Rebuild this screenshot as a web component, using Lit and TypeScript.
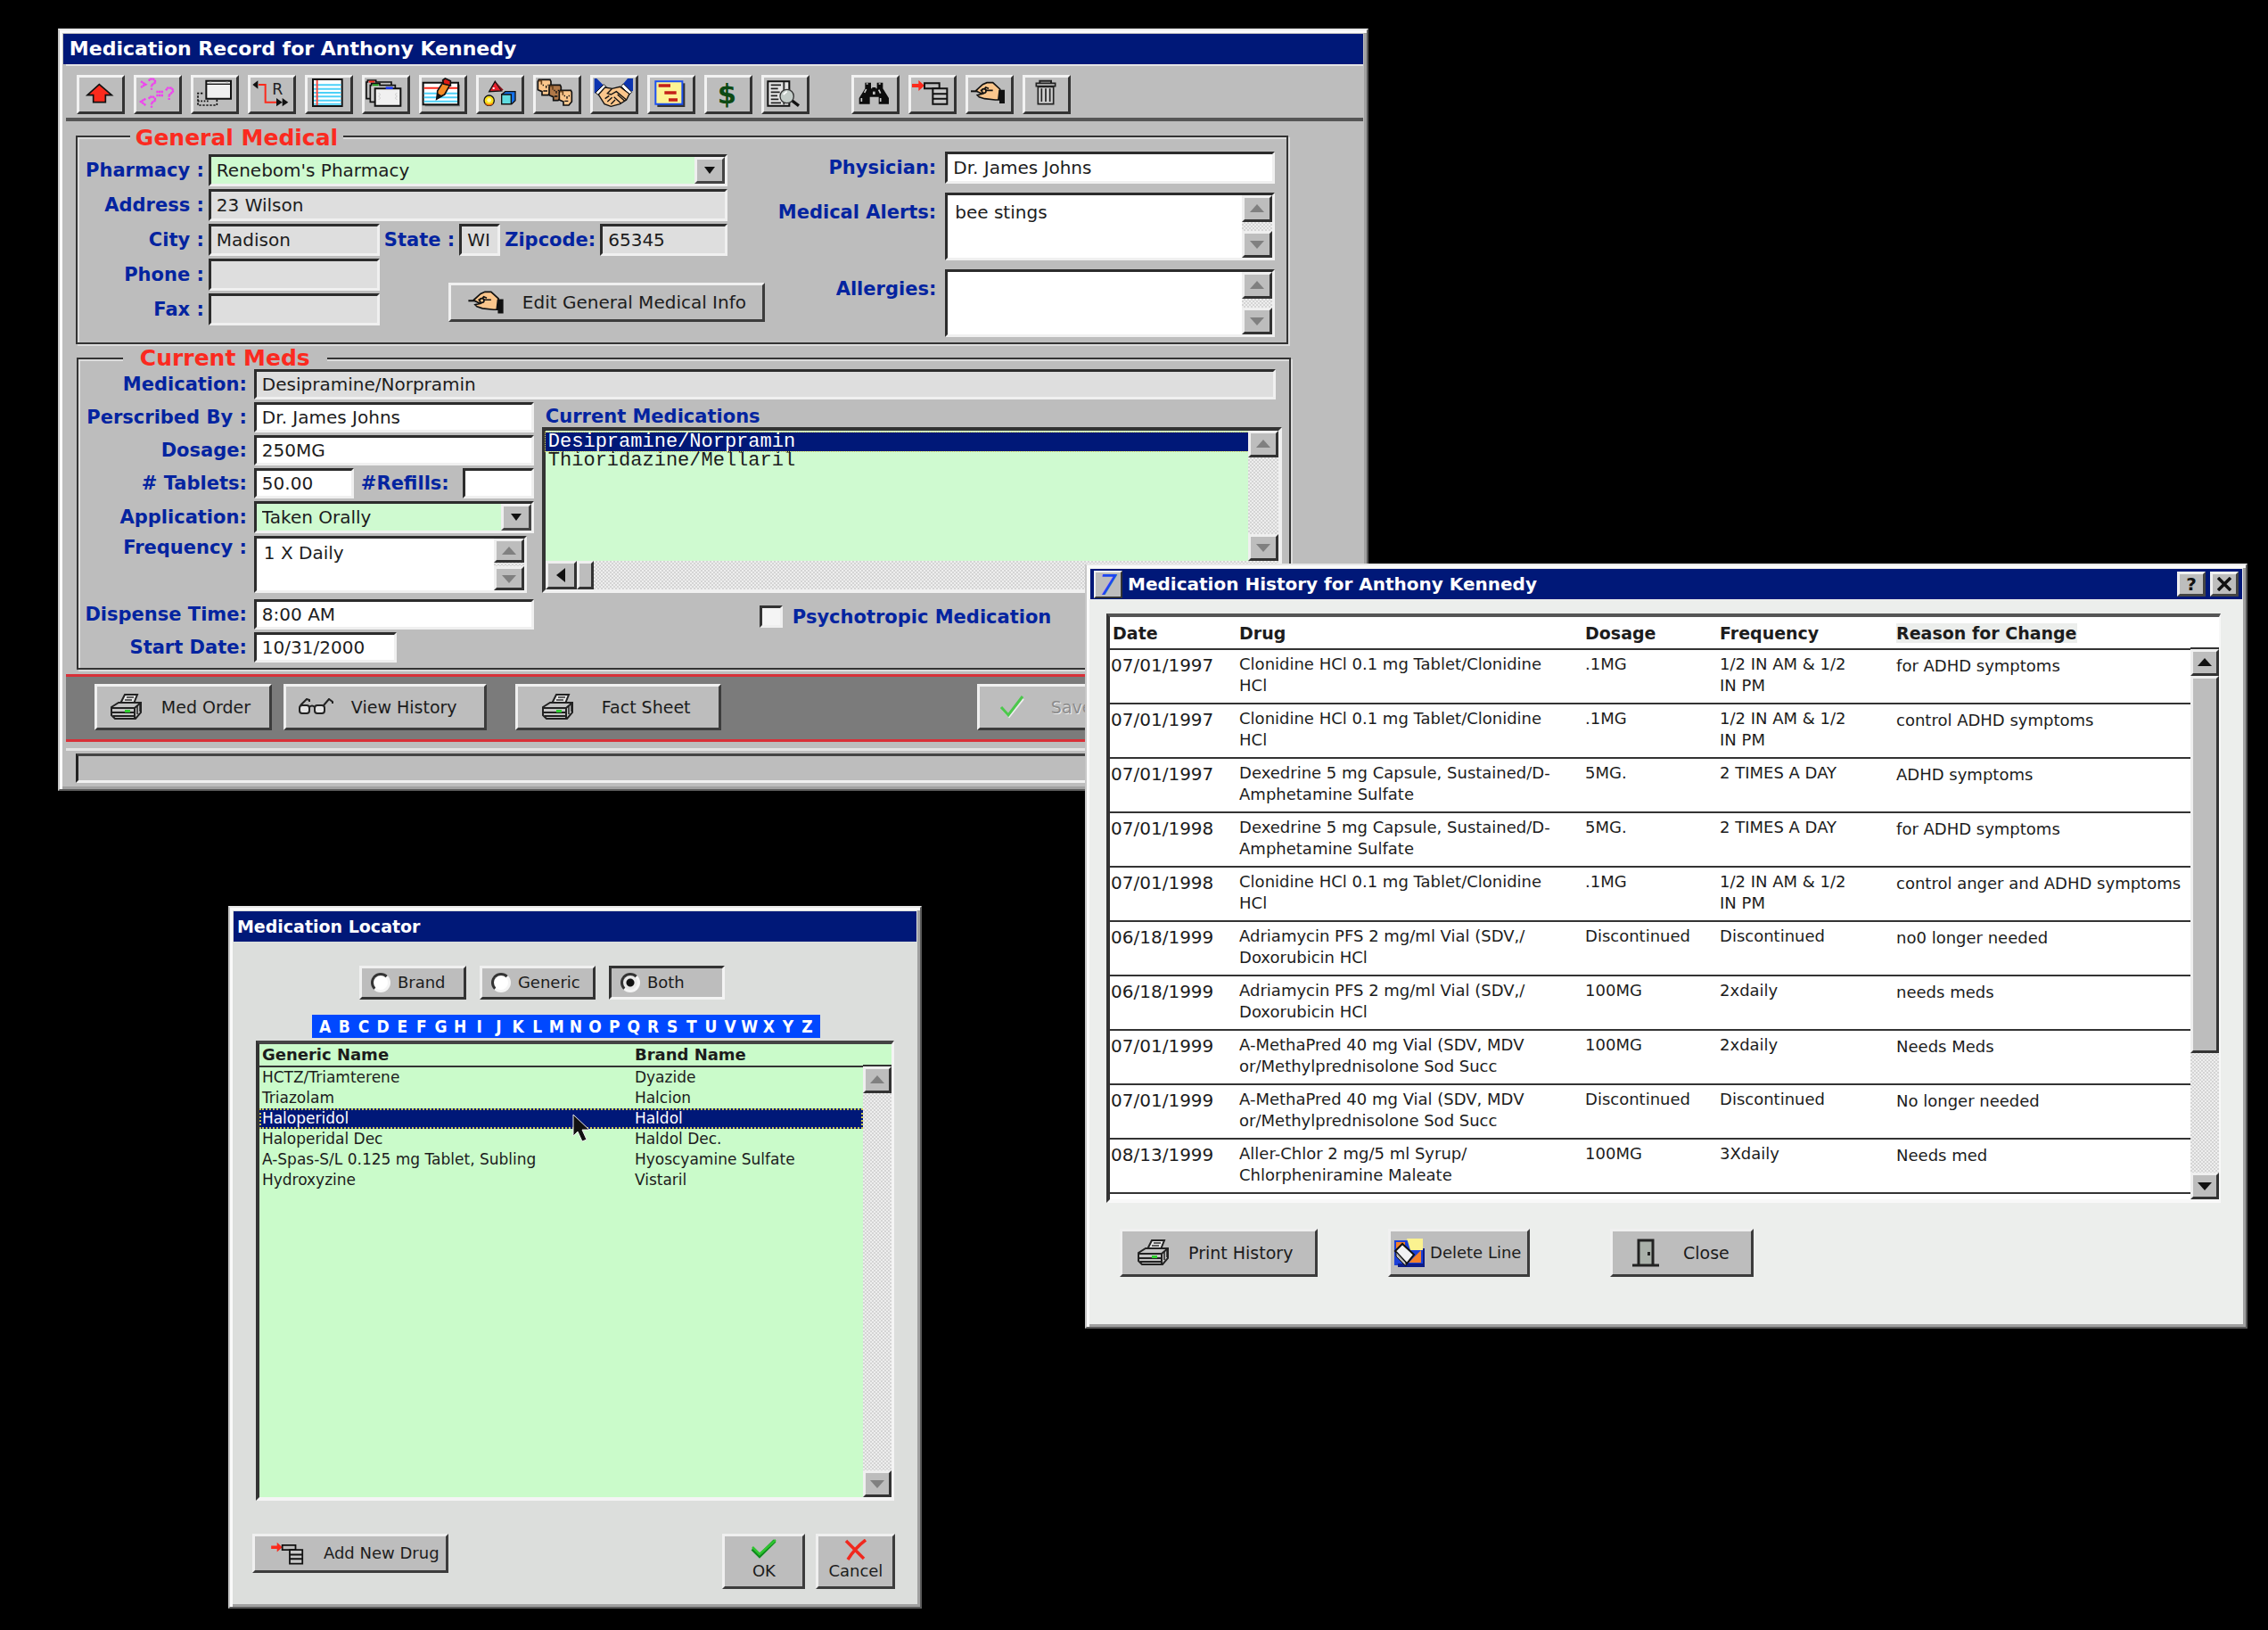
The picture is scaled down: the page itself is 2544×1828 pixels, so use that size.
import { LitElement, html, css, svg, nothing } from "lit";
import { customElement, property, state } from "lit/decorators.js";
import { classMap } from "lit/directives/class-map.js";

/* ---------- pixel-style icons ---------- */

const SKIN = "#fbc68c";

const hand = svg`
  <path d="M18 55H60" stroke="#111" stroke-width="6"/>
  <path d="M36 52 58 32 72 26H92L116 48V84L100 84 64 80 46 74 40 68 56 64 40 56Z" fill="${SKIN}" stroke="#111" stroke-width="5"/>
  <path d="M50 52H92M56 58 68 42 78 46" stroke="#111" stroke-width="5" fill="none"/>
  <circle cx="62" cy="54" r="7" fill="${SKIN}" stroke="#111" stroke-width="5"/>
  <path d="M112 50H132V96H114V84H108Z" fill="#111"/>`;

const addList = svg`
  <path d="M12 30H34V18L54 36 34 54V42H12Z" fill="#fb2a1c"/>
  <path d="M54 28H104V46H54Z" fill="#bdbdbd" stroke="#111" stroke-width="6"/>
  <path d="M82 46H130V98H82Z" fill="#c8c8c8" stroke="#111" stroke-width="6"/>
  <path d="M82 64H130M82 80H130" stroke="#111" stroke-width="6"/>`;

const face = (x: number, y: number, w: number, h: number, c: string) => svg`
  <path d="M${x + 3} ${y}H${x + w - 3}L${x + w} ${y + 6}V${y + h - 12}L${x + w - 10} ${y + h}H${x + 14}V${y + h - 12}L${x} ${y + h - 18}V${y + 6}Z" fill="${c}" stroke="#111" stroke-width="5"/>
  <path d="M${x + 2} ${y + 4}H${x + 12}V${y + 16}" stroke="#6a4420" stroke-width="5" fill="none"/>
  <path d="M${x + 18} ${y + 16}v5M${x + w - 9} ${y + 16}v5M${x + w - 16} ${y + 20}v8M${x + 18} ${y + h - 14}H${x + w - 12}" stroke="#111" stroke-width="4" fill="none"/>`;

const folder = (x: number, y: number, tab: string, fill: string) => svg`
  <path d="M${x} ${y}H${x + 4}V${y - 6}H${x + 32}V${y}H${x + 84}V${y + 56}H${x}Z" fill="${fill}" stroke="#111" stroke-width="5"/>
  <path d="M${x + 8} ${y - 4}h20v6h-20z" fill="${tab}"/>`;

const icons: Record<string, unknown> = {
  up: svg`<path d="M76 32 118 68H97V92H56V68H36Z" fill="#fb2a1c" stroke="#111" stroke-width="5"/>`,
  compare: svg`<g fill="none" stroke="#f040f0" stroke-width="7" stroke-dasharray="7 1">
    <path d="M24 22 40 32 24 42M40 80 24 90 40 102M76 57H100M76 69H100"/>
    <path d="M50 20 56 14H66L72 20V26L60 34V40M60 44v6M50 80 56 74H66L72 80V86L60 94V100M60 104v6M108 52 114 44H126L132 50V56L119 68V74M119 78v6"/></g>`,
  windows: svg`
    <path d="M40 62H24V102H88V80" fill="none" stroke="#111" stroke-width="5" stroke-dasharray="7 5"/>
    <path d="M24 88H60" stroke="#111" stroke-width="5" stroke-dasharray="5 5"/>
    <path d="M52 20H135V80H52Z" fill="#f0f0f0" stroke="#111" stroke-width="6"/>
    <path d="M52 31H135" stroke="#111" stroke-width="4"/><path d="M62 25h8M118 25h8" stroke="#ccc" stroke-width="4"/>`,
  route: svg`
    <path d="M36 33H59V92H98" fill="none" stroke="#fb2a1c" stroke-width="6"/>
    <path d="M16 33 34 19V47ZM96 78 116 92 96 106ZM116 78 136 92 116 106Z" fill="#111"/>
    <text x="82" y="66" font-family="DejaVu Sans" font-size="52" fill="#222">R</text>`,
  notebook: svg`
    <path d="M27 15H125V105H27Z" fill="#fff" stroke="#111" stroke-width="6"/>
    <path d="M30 34H122M30 47H122M30 60H122M30 73H122M30 86H122M30 98H122" stroke="#4cd0f8" stroke-width="6"/>
    <path d="M41 18V102" stroke="#fb4a40" stroke-width="6"/>`,
  folders: svg`${folder(15, 24, "#fb2a1c", "#bdbdbd")}${folder(28, 35, "#18a018", "#cfcfcf")}
    <path d="M44 46H130V104H44Z" fill="#f0f0f0" stroke="#111" stroke-width="6"/>
    <path d="M80 40H104V48H80Z" fill="#1c38f0"/>
    <path d="M56 60l6 6-6 6 6 6-6 6M118 60l-6 6 6 6-6 6 6 6" fill="none" stroke="#ccc" stroke-width="3"/>`,
  card: svg`
    <path d="M20 32H138V106H20Z" fill="#777"/>
    <path d="M14 26H132V100H14Z" fill="#fff" stroke="#111" stroke-width="6"/>
    <path d="M17 44H129" stroke="#fb2a1c" stroke-width="6"/>
    <path d="M17 62H129M17 76H129M17 89H129" stroke="#4cd0f8" stroke-width="6"/>
    <path d="M80 26 104 34 86 66 62 78 62 54Z" fill="#f58a24" stroke="#111" stroke-width="5"/>
    <path d="M56 86 60 60 80 72Z" fill="#111"/>
    <path d="M80 18 88 12 106 20 106 36 82 30Z" fill="#e01c14" stroke="#111" stroke-width="5"/>`,
  shapes: svg`
    <path d="M64 22 86 54 44 56Z" fill="#e8202c" stroke="#111" stroke-width="4"/>
    <path d="M64 22 92 50 86 54Z" fill="#801018"/><path d="M56 42h6v6h-6z" fill="#fff"/>
    <circle cx="44" cy="86" r="17" fill="#fbe21c" stroke="#111" stroke-width="4"/>
    <path d="M32 96a17 17 0 0 0 24 0" fill="none" stroke="#f07010" stroke-width="5"/><circle cx="44" cy="85" r="7" fill="#fff6b0"/>
    <path d="M86 66 98 56H132V86L120 98H86Z" fill="#1470e8" stroke="#111" stroke-width="4"/>
    <path d="M86 66H118V98H86Z" fill="#60dce0" stroke="#111" stroke-width="4"/>`,
  faces: svg`${face(16, 16, 44, 52, SKIN)}${face(54, 34, 40, 52, "#b07848")}${face(88, 52, 42, 50, SKIN)}`,
  handshake: svg`
    <path d="M14 12H22L46 36 22 58 14 62Z" fill="#0c34b0"/><path d="M144 12H126L108 34 132 58 144 54Z" fill="#0c34b0"/>
    <path d="M18 60 46 32 54 40 28 68ZM140 58 112 30 104 38 132 66Z" fill="#fff" stroke="#111" stroke-width="3"/>
    <path d="M28 66 50 42 74 46 100 40 132 64 122 84 100 98 70 106 48 98Z" fill="${SKIN}" stroke="#111" stroke-width="4"/>
    <path d="M74 46 58 62 70 66 88 56 122 84M50 80 64 70M58 90 74 76M70 98 84 84M80 74 104 96M92 66 116 88" fill="none" stroke="#111" stroke-width="4"/>`,
  planner: svg`
    <path d="M34 28H127V108H34Z" fill="#333"/>
    <path d="M28 22H118V98H28Z" fill="#fdf394" stroke="#1c50f0" stroke-width="6"/>
    <path d="M38 36H78M58 60H98M72 84H102" stroke="#c42018" stroke-width="11"/>`,
  dollar: svg`<text x="76" y="96" text-anchor="middle" font-family="DejaVu Sans" font-weight="700" font-size="92" fill="#0c4a14">$</text>`,
  search: svg`
    <path d="M22 22H94V104H22Z" fill="#e4e4e4" stroke="#111" stroke-width="6"/>
    <path d="M32 34h34M32 46h24M32 58h30M32 70h22M32 82h26M32 94h34" stroke="#222" stroke-width="5"/>
    <path d="M76 24V100" stroke="#333" stroke-width="6"/>
    <path d="M100 84 126 104" stroke="#111" stroke-width="10"/>
    <circle cx="86" cy="72" r="23" fill="#c4ccc8" stroke="#333" stroke-width="4"/><path d="M74 66l12-10" stroke="#fff" stroke-width="5"/>`,
  find: svg`
    <path d="M46 26H66V46H70V42H82V46H86V26H106V46L126 78V98H92V74H62V98H26V78L46 46Z" fill="#0c0c0c"/>
    <path d="M34 78v12M98 78v12M50 48l-6 12M92 50l6 12M50 30h6M92 30h6" stroke="#ccc" stroke-width="5"/>
    <path d="M72 56h8v10h-8z" fill="#bdbdbd"/>`,
  addList,
  hand,
  trash: svg`
    <path d="M58 28V20H96V28" fill="none" stroke="#222" stroke-width="6"/>
    <path d="M46 28H110V38H46Z" fill="#c8c8c8" stroke="#222" stroke-width="5"/>
    <path d="M52 40H104V98H52Z" fill="#cfcfcf" stroke="#222" stroke-width="5"/>
    <path d="M64 46V90M78 46V90M92 46V90" stroke="#222" stroke-width="5"/>`,
};

const glyph = (w: number, h: number, box: string, body: unknown) =>
  html`<svg class="glyph" width=${w} height=${h} viewBox=${box} aria-hidden="true">${body}</svg>`;

const printer = glyph(36, 30, "0 0 36 30", svg`
  <path d="M11 11 16 1H30L26 11" fill="#e6e6e6" stroke="#222" stroke-width="2"/>
  <path d="M18 4h8M16 7h8M15 10h8" stroke="#333" stroke-width="1.4"/>
  <path d="M1 15 9 10H34V21L28 28H5L1 24Z" fill="#c4c4c4" stroke="#222" stroke-width="2"/>
  <path d="M1 16H27L34 10M27 16V28M2 21H27M3 25H27" fill="none" stroke="#222" stroke-width="2"/>
  <path d="M30 13v10M33 12v8" stroke="#222" stroke-width="1.5"/>
  <path d="M16 18h6v3h-6z" fill="#2fd02f"/>`);
const glasses = glyph(40, 20, "0 0 40 20", svg`
  <g fill="none" stroke="#222" stroke-width="2"><rect x="2" y="8" width="11" height="9" rx="3" fill="#e2e2e2"/><rect x="19" y="8" width="11" height="9" rx="3" fill="#e2e2e2"/>
  <path d="M13 10Q16 7 19 10M3 8 10 1 13 2V4M29 8 35 1 39 4V6"/></g>`);
const handGlyph = glyph(42, 28, "14 20 122 80", hand);
const addGlyph = glyph(38, 28, "8 16 128 86", addList);
const check = (w: number, h: number) => glyph(w, h, "0 0 30 24", svg`<path d="M2 11 10 19 27 2" fill="none" stroke="#0d8a1c" stroke-width="4"/><path d="M2 9 10 17 28 1" fill="none" stroke="#2fc430" stroke-width="2.5"/>`);
const paleCheck = glyph(28, 28, "0 0 28 28", svg`<path d="M4 17 11 25 27 5" fill="none" stroke="#eee" stroke-width="2"/><path d="M2 14 10 23 26 2" fill="none" stroke="#4cc84c" stroke-width="3"/>`);
const cross = glyph(26, 24, "0 0 26 24", svg`<path d="M2 2 22 22M24 1Q12 10 4 23" fill="none" stroke="#f0281e" stroke-width="3.5"/>`);
const eraser = glyph(36, 34, "0 0 36 34", svg`
  <path d="M2 3H34V31H2Z" fill="#1c40d8"/><path d="M6 31H36V12" fill="none" stroke="#0c1c88" stroke-width="4"/>
  <path d="M16 1H34V14H20Z" fill="#fbf290"/><path d="M4 5H14V12H4ZM18 28 32 14V28Z" fill="#f5802a"/>
  <path d="M3 15 11 7 24 19 16 29Z" fill="#f2f2f2" stroke="#111" stroke-width="2"/><path d="M4 16v5l11 11v-4z" fill="#bbb" stroke="#111" stroke-width="1"/>`);
const door = glyph(30, 32, "0 0 30 32", svg`
  <path d="M7 29V2H23V29" fill="#a9b0a9" stroke="#222" stroke-width="3"/><path d="M0 30H30" stroke="#222" stroke-width="3"/><path d="M17 15h3v4h-3z" fill="#222"/>`);

/* ---------- shared styles ---------- */

const shared = css`
  :host { display: block; font: 20px/24px "DejaVu Sans", Verdana, sans-serif; color: #1c1c1c; }
  * { box-sizing: border-box; }
  button, input, select, textarea { font: inherit; color: inherit; margin: 0; }
  .glyph { display: block; flex: none; }
  .btn {
    display: flex; align-items: center; padding: 0 4px; border: 3px solid;
    border-color: #f0f0f0 #3c3c3c #3c3c3c #f0f0f0; background: #bdbdbd; border-radius: 0;
    font-size: 19px; white-space: nowrap; cursor: pointer;
  }
  .btn:active { border-color: #3c3c3c #f0f0f0 #f0f0f0 #3c3c3c; }
`;

/* ---------- window frame ---------- */

@customElement("app-window")
class AppWindow extends LitElement {
  @property() heading = "";
  static styles = [shared, css`
    .frame {
      border: 2px solid; border-color: #e8e8e8 #5a5a5a #5a5a5a #c8c8c8; padding: 4px;
      background: var(--face, #bdbdbd); box-shadow: inset 3px 3px #fafafa, inset -3px -3px #a0a0a0;
    }
    .title {
      display: flex; align-items: center; gap: 6px; height: 34px; margin: 0; padding: 0 4px 0 var(--title-pad, 4px);
      background: #001878; color: #fff; font-size: var(--title-size, 20px); font-weight: 700; white-space: nowrap;
    }
    .text { flex: 1; }
  `];
  render() {
    return html`<section class="frame" aria-label=${this.heading}>
      <h1 class="title"><slot name="badge"></slot><span class="text">${this.heading}</span><slot name="controls"></slot></h1>
      <slot></slot>
    </section>`;
  }
}

/* ---------- scroll bar ---------- */

@customElement("scroll-bar")
class ScrollBar extends LitElement {
  @property({ type: Boolean }) active = false;
  @property({ type: Number }) thumb = 0;
  static styles = [shared, css`
    :host { display: flex; flex-direction: column; width: 34px; flex: none;
      background: repeating-conic-gradient(#eee 0 25%, #d4d4d4 0 50%) 0 0 / 4px 4px; }
    .arrow { display: grid; place-items: center; height: 30px; padding: 0; border: 3px solid;
      border-color: #efefef #333 #333 #efefef; background: #bdbdbd; color: #808080; }
    .active { color: #111; }
    .track { flex: 1; min-height: 0; }
    .thumb { border: 3px solid; border-color: #efefef #333 #333 #efefef; background: #bdbdbd; }
    :host([small]) .arrow { height: 27px; }
  `];
  render() {
    const c = classMap({ arrow: true, active: this.active });
    return html`
      <button class=${c} aria-label="Scroll up">${glyph(16, 10, "0 0 16 10", svg`<path d="M8 0 16 9H0Z" fill="currentColor"/>`)}</button>
      <div class="track">${this.thumb ? html`<div class="thumb" style="height:${this.thumb}%"></div>` : nothing}</div>
      <button class=${c} aria-label="Scroll down">${glyph(16, 10, "0 0 16 10", svg`<path d="M0 1H16L8 10Z" fill="currentColor"/>`)}</button>`;
  }
}

/* ---------- medication record ---------- */

@customElement("medication-record")
class MedicationRecord extends LitElement {
  @state() private selected = 0;

  static styles = [shared, css`
    .toolbar { display: flex; gap: 10px; padding: 10px 12px 4px; border-bottom: 4px solid #555; border-top: 2px solid #e4e4e4; margin-left: 3px; }
    .tool { width: 54px; height: 44px; padding: 0; border: 3px solid; border-color: #f2f2f2 #333 #333 #f2f2f2; background: #bdbdbd; flex: none; }
    .tool svg { display: block; margin: -3px; }
    .tool.apart { margin-left: 37px; }
    fieldset { min-width: 0; border: 2px solid #333; box-shadow: inset 2px 2px #dcdcdc, 2px 2px #dcdcdc; margin: 0; }
    legend { font-size: 25px; font-weight: 700; line-height: 24px; color: #fb2a20; background: #bdbdbd; }
    .general { margin: 3px 84px 0 14px; padding: 3px 13px 6px 6px; display: grid; grid-template-columns: minmax(0, 761fr) minmax(0, 578fr); }
    .general legend { margin-left: 53px; padding: 4px 6px 0; }
    .current { margin: 4px 81px 0 15px; padding: 0 8px 6px 0; }
    .current legend { margin-left: 50px; padding: 0 19px; }
    label, .caption { font-size: 21px; font-weight: 700; color: #0424a0; white-space: nowrap; }
    .field { height: 36px; min-width: 0; border: 3px solid; border-color: #2c2c2c #f0f0f0 #f0f0f0 #2c2c2c; padding: 0 6px; background: #fff; border-radius: 0; outline: none; }
    .off { background: #dedede; }
    .combo { display: flex; padding: 0; background: #cffad0; }
    .combo select { flex: 1; min-width: 0; appearance: none; border: 0; background: none; padding: 0 6px; outline: none; }
    .drop { display: grid; place-items: center; width: 34px; border: 3px solid; border-color: #efefef #444 #444 #efefef; background: #bdbdbd; pointer-events: none; }
    .memo { display: flex; height: 76px; padding: 0; }
    .memo textarea { flex: 1; min-width: 0; border: 0; padding: 7px 8px; resize: none; outline: none; overflow: hidden; background: none; }
    .rows { display: grid; grid-template-columns: minmax(0, 1fr); gap: 3px; align-content: start; }
    .row { display: flex; align-items: center; gap: 5px; }
    .row > label:first-child { flex: none; width: 136px; text-align: right; }
    .grow { flex: 1; }
    .inset { padding-right: 37px; }
    .pad3 { padding-top: 3px; }
    .w192 { width: 192px; flex: none; }
    .state { width: 46px; flex: none; }
    .contact { display: flex; align-items: flex-start; }
    .contact .rows { width: 333px; flex: none; }
    .edit { flex: 1; height: 44px; margin: 27px 0 0 77px; padding: 0 18px; gap: 20px; font-size: 20px; }
    .right { display: grid; gap: 10px; align-content: start; }
    .right .row { gap: 10px; }
    .right .row > label:first-child { flex: 1; width: auto; }
    .right .field { width: 370px; }
    .top { align-items: flex-start; }
    .top > label { padding-top: 10px; }
    .current .row { gap: 8px; }
    .current .row > label:first-child { width: 189px; }
    .current .field { height: 34px; }
    .wide { margin-right: 7px; }
    .split { display: grid; grid-template-columns: 520px 1fr; margin-top: 3px; }
    .current .w314 { width: 314px; }
    .current .w306 { width: 306px; }
    .current .w112 { width: 112px; }
    .current .w160 { width: 160px; }
    .current .w80 { width: 80px; }
    .tablets { width: 511px; }
    .tablets .w80 { margin-left: auto; }
    .current .combo { height: 36px; }
    .current .memo { height: 64px; margin-bottom: 4px; }
    .current .memo textarea { padding: 4px 8px; }
    .current .top > label { padding-top: 1px; }
    .caption { padding: 4px 0 0 4px; line-height: 24px; margin: 0; }
    .list { height: 186px; border: 4px solid; border-color: #333 #f0f0f0 #f0f0f0 #333; background: #cffad0; display: grid; grid-template-columns: 1fr 34px; grid-template-rows: 1fr 32px; }
    .options { margin: 0; padding: 2px 0 0; list-style: none; font: 22px/21px "Liberation Mono", monospace; }
    .option { padding-left: 3px; white-space: pre; }
    .picked { background: #001878; color: #fff; outline: 1px dotted #d8d860; }
    .hscroll { grid-column: 1 / -1; display: flex; background: repeating-conic-gradient(#eee 0 25%, #d4d4d4 0 50%) 0 0 / 4px 4px; }
    .hbtn { width: 35px; padding: 0; border: 3px solid; border-color: #efefef #333 #333 #efefef; background: #bdbdbd; display: grid; place-items: center; }
    .hthumb { width: 19px; border: 3px solid; border-color: #efefef #333 #333 #efefef; background: #bdbdbd; }
    .flag { display: flex; align-items: center; gap: 11px; margin: 14px 0 0 244px; }
    .flag input { appearance: none; width: 26px; height: 25px; border: 3px solid; border-color: #333 #efefef #efefef #333; background: #f4f4f4; border-radius: 0; }
    .flag input:checked { background: #333; }
    .actions { display: flex; gap: 13px; margin: 5px 0 0 3px; padding: 8px 32px 10px; background: #7b7b7b; border: solid #d83038; border-width: 3px 0; }
    .actions .btn { height: 52px; }
    .order { width: 199px; padding: 0 15px; gap: 21px; }
    .view { width: 228px; padding: 0 13px; gap: 20px; }
    .fact { width: 231px; padding: 0 27px; gap: 31px; margin-left: 19px; }
    .save { width: 231px; padding: 0 22px; gap: 30px; margin-left: 274px; color: #8c8c8c; text-shadow: 1px 1px #eee; }
    .status { margin: 7px 10px 3px 3px; padding-left: 11px; border-top: 3px solid #e4e4e4; }
    .well { height: 33px; margin-top: 3px; border: 3px solid; border-color: #444 #f0f0f0 #f0f0f0 #222; }
  `];

  private tools: [string, string][] = [
    ["up", "Go up"], ["compare", "Compare"], ["windows", "Windows"], ["route", "Routing"], ["notebook", "Notes"],
    ["folders", "Folders"], ["card", "Edit card"], ["shapes", "Activities"], ["faces", "Family"], ["handshake", "Agreements"],
    ["planner", "Planner"], ["dollar", "Billing"], ["search", "Search record"], ["find", "Find"], ["addList", "Add"],
    ["hand", "Edit"], ["trash", "Delete"],
  ];
  private meds = ["Desipramine/Norpramin", "Thioridazine/Mellaril"];

  private combo(id: string, value: string, cls: string) {
    return html`<div class="field combo ${cls}"><select id=${id}><option>${value}</option></select>
      <span class="drop">${glyph(12, 8, "0 0 12 8", svg`<path d="M0 0H12L6 8Z" fill="#111"/>`)}</span></div>`;
  }
  private memo(id: string, value: string, cls = "", small = false) {
    return html`<div class="field memo ${cls}"><textarea id=${id} .value=${value}></textarea><scroll-bar ?small=${small}></scroll-bar></div>`;
  }

  render() {
    return html`<app-window heading="Medication Record for Anthony Kennedy">
      <div class="toolbar" role="toolbar">${this.tools.map(([k, t]) => html`
        <button class="tool ${k === "find" ? "apart" : ""}" aria-label=${t}><svg width="54" height="44" viewBox="0 0 162 132">${icons[k]}</svg></button>`)}</div>

      <fieldset class="general">
        <legend>General Medical</legend>
        <div class="rows pad3">
          <div class="row inset"><label for="pharmacy">Pharmacy :</label>${this.combo("pharmacy", "Renebom's Pharmacy", "grow")}</div>
          <div class="row inset"><label for="address">Address :</label><input class="field off grow" id="address" value="23 Wilson"></div>
          <div class="row inset"><label for="city">City :</label><input class="field off w192" id="city" value="Madison">
            <label for="state">State :</label><input class="field off state" id="state" value="WI">
            <label for="zip">Zipcode:</label><input class="field off grow" id="zip" value="65345"></div>
          <div class="contact">
            <div class="rows">
              <div class="row"><label for="phone">Phone :</label><input class="field off w192" id="phone"></div>
              <div class="row"><label for="fax">Fax :</label><input class="field off w192" id="fax"></div>
            </div>
            <button class="btn edit">${handGlyph}Edit General Medical Info</button>
          </div>
        </div>
        <div class="right">
          <div class="row"><label for="physician">Physician:</label><input class="field" id="physician" value="Dr. James Johns"></div>
          <div class="row top"><label for="alerts">Medical Alerts:</label>${this.memo("alerts", "bee stings")}</div>
          <div class="row top"><label for="allergies">Allergies:</label>${this.memo("allergies", "")}</div>
        </div>
      </fieldset>

      <fieldset class="current">
        <legend>Current Meds</legend>
        <div class="row wide"><label for="medication">Medication:</label><input class="field off grow" id="medication" value="Desipramine/Norpramin"></div>
        <div class="split">
          <div class="rows">
            <div class="row"><label for="by">Perscribed By :</label><input class="field w314" id="by" value="Dr. James Johns"></div>
            <div class="row"><label for="dosage">Dosage:</label><input class="field w314" id="dosage" value="250MG"></div>
            <div class="row tablets"><label for="tablets"># Tablets:</label><input class="field w112" id="tablets" value="50.00">
              <label for="refills">#Refills:</label><input class="field w80" id="refills"></div>
            <div class="row"><label for="application">Application:</label>${this.combo("application", "Taken Orally", "w314")}</div>
            <div class="row top"><label for="frequency">Frequency :</label>${this.memo("frequency", "1 X Daily", "w306", true)}</div>
            <div class="row"><label for="time">Dispense Time:</label><input class="field w314" id="time" value="8:00 AM"></div>
            <div class="row"><label for="start">Start Date:</label><input class="field w160" id="start" value="10/31/2000"></div>
          </div>
          <div>
            <p class="caption" id="meds-caption">Current Medications</p>
            <div class="list">
              <ul class="options" role="listbox" aria-labelledby="meds-caption">${this.meds.map((m, i) => html`
                <li class=${classMap({ option: true, picked: i === this.selected })} role="option" aria-selected=${i === this.selected} @click=${() => (this.selected = i)}>${m}</li>`)}</ul>
              <scroll-bar></scroll-bar>
              <div class="hscroll"><button class="hbtn" aria-label="Scroll left">${glyph(10, 16, "0 0 10 16", svg`<path d="M0 8 10 0V16Z" fill="#111"/>`)}</button><span class="hthumb"></span></div>
            </div>
            <div class="flag"><input type="checkbox" id="psy"><label for="psy">Psychotropic Medication</label></div>
          </div>
        </div>
      </fieldset>

      <div class="actions">
        <button class="btn order">${printer}Med Order</button>
        <button class="btn view">${glasses}View History</button>
        <button class="btn fact">${printer}Fact Sheet</button>
        <button class="btn save">${paleCheck}Save</button>
      </div>
      <div class="status"><div class="well" role="status"></div></div>
    </app-window>`;
  }
}

/* ---------- medication history ---------- */

type HistoryRow = [string, string, string, string, string];

@customElement("medication-history")
class MedicationHistory extends LitElement {
  static styles = [shared, css`
    .badge { display: grid; place-items: center; width: 32px; height: 31px; border: 2px solid; border-color: #f0f0f0 #333 #333 #f0f0f0; background: #bdbdbd; color: #1c48f0; font: italic 32px/28px "DejaVu Sans"; }
    .controls { display: flex; gap: 5px; }
    .ctl { display: grid; place-items: center; width: 32px; height: 28px; padding: 0; border: 3px solid; border-color: #f0f0f0 #444 #444 #f0f0f0; background: #bdbdbd; font-weight: 700; font-size: 20px; line-height: 20px; color: #111; }
    .grid { display: flex; margin: 16px 24px 0 18px; border: 4px solid; border-color: #555 #f8f8f8 #f8f8f8 #333; border-right-width: 2px; background: #fff; }
    table { flex: 1; table-layout: fixed; border-collapse: collapse; font-size: 18px; line-height: 24px; margin-bottom: 6px; width: 100%; }
    th { text-align: left; height: 36px; padding: 0 0 0 3px; font-size: 19px; border-bottom: 2px solid #333; white-space: nowrap; }
    td { height: 61px; vertical-align: top; padding: 4px 0 0 3px; border-bottom: 2px solid #333; white-space: pre; }
    .c1 { width: 142px; } .c2 { width: 388px; } .c3 { width: 151px; } .c4 { width: 198px; }
    .date { font-size: 20px; padding-left: 1px; padding-top: 5px; }
    .why { padding-top: 6px; }
    .mark { background: #eceeec; }
    .side { display: flex; flex-direction: column; width: 32px; }
    .cap { height: 36px; border-bottom: 2px solid #333; }
    scroll-bar { flex: 1; width: 32px; }
    .foot { display: flex; align-items: flex-start; margin: 29px 33px 52px; }
    .foot .btn { height: 54px; }
    .print { width: 222px; padding: 0 17px; gap: 21px; }
    .foot .delete { width: 159px; padding: 0 2px; gap: 6px; margin-left: 79px; font-size: 18px; }
    .close { width: 161px; padding: 0 22px; gap: 27px; margin-left: 90px; }
  `];
  private rows: HistoryRow[] = [
    ["07/01/1997", "Clonidine HCl 0.1 mg Tablet/Clonidine\nHCl", ".1MG", "1/2 IN AM & 1/2\nIN PM", "for ADHD symptoms"],
    ["07/01/1997", "Clonidine HCl 0.1 mg Tablet/Clonidine\nHCl", ".1MG", "1/2 IN AM & 1/2\nIN PM", "control ADHD symptoms"],
    ["07/01/1997", "Dexedrine 5 mg Capsule, Sustained/D-\nAmphetamine Sulfate", "5MG.", "2 TIMES A DAY", "ADHD symptoms"],
    ["07/01/1998", "Dexedrine 5 mg Capsule, Sustained/D-\nAmphetamine Sulfate", "5MG.", "2 TIMES A DAY", "for ADHD symptoms"],
    ["07/01/1998", "Clonidine HCl 0.1 mg Tablet/Clonidine\nHCl", ".1MG", "1/2 IN AM & 1/2\nIN PM", "control anger and ADHD symptoms"],
    ["06/18/1999", "Adriamycin PFS 2 mg/ml Vial (SDV,/\nDoxorubicin HCl", "Discontinued", "Discontinued", "no0 longer needed"],
    ["06/18/1999", "Adriamycin PFS 2 mg/ml Vial (SDV,/\nDoxorubicin HCl", "100MG", "2xdaily", "needs meds"],
    ["07/01/1999", "A-MethaPred 40 mg Vial (SDV, MDV\nor/Methylprednisolone Sod Succ", "100MG", "2xdaily", "Needs Meds"],
    ["07/01/1999", "A-MethaPred 40 mg Vial (SDV, MDV\nor/Methylprednisolone Sod Succ", "Discontinued", "Discontinued", "No longer needed"],
    ["08/13/1999", "Aller-Chlor 2 mg/5 ml Syrup/\nChlorpheniramine Maleate", "100MG", "3Xdaily", "Needs med"],
  ];
  render() {
    return html`<app-window heading="Medication History for Anthony Kennedy">
      <span slot="badge" class="badge" aria-hidden="true">7</span>
      <span slot="controls" class="controls"><button class="ctl" aria-label="Help">?</button><button class="ctl" aria-label="Close window">${glyph(16, 16, "0 0 16 16", svg`<path d="M1 1 15 15M15 1 1 15" stroke="#111" stroke-width="3.5"/>`)}</button></span>
      <div class="grid">
        <table>
          <colgroup><col class="c1"><col class="c2"><col class="c3"><col class="c4"><col></colgroup>
          <thead><tr><th>Date</th><th>Drug</th><th>Dosage</th><th>Frequency</th><th><span class="mark">Reason for Change</span></th></tr></thead>
          <tbody>${this.rows.map(([d, g, o, f, w]) => html`<tr><td class="date">${d}</td><td>${g}</td><td>${o}</td><td>${f}</td><td class="why">${w}</td></tr>`)}</tbody>
        </table>
        <div class="side"><div class="cap"></div><scroll-bar active thumb="76"></scroll-bar></div>
      </div>
      <div class="foot">
        <button class="btn print">${printer}Print History</button>
        <button class="btn delete">${eraser}Delete Line</button>
        <button class="btn close">${door}Close</button>
      </div>
    </app-window>`;
  }
}

/* ---------- medication locator ---------- */

@customElement("medication-locator")
class MedicationLocator extends LitElement {
  @state() private mode = "Both";
  @state() private picked = 2;
  static styles = [shared, css`
    :host { position: relative; }
    .modes { display: flex; gap: 15px; margin: 27px 0 0 141px; align-items: flex-start; }
    .mode { display: flex; align-items: center; gap: 8px; height: 38px; width: 130px; padding: 0 10px; border: 3px solid; border-color: #f0f0f0 #333 #333 #f0f0f0; background: #bdbdbd; font-size: 18px; }
    .mode.first { width: 120px; }
    .mode.on { border-color: #333 #f4f4f4 #f4f4f4 #333; }
    .mode input { appearance: none; flex: none; width: 22px; height: 22px; border: 3px solid; border-color: #333 #f4f4f4 #f4f4f4 #333; border-radius: 50%; background: #fff; }
    .mode input:checked { background: radial-gradient(circle, #111 0 4px, #e8e8e8 5px); }
    .letters { display: grid; grid-template-columns: repeat(26, 1fr); margin: 17px 108px 3px 88px; padding: 0 4px; background: #0048ff; height: 26px; }
    .letters a { color: #fff; text-decoration: none; text-align: center; font: 700 19px/26px "DejaVu Sans Condensed", "DejaVu Sans", sans-serif; }
    .grid { display: flex; min-height: 516px; margin: 0 25px; border: 4px solid; border-color: #444 #f4f4f4 #f4f4f4 #333; border-right-width: 3px; background: #cafbca; }
    .main { flex: 1; min-width: 0; }
    table { width: 100%; table-layout: fixed; border-collapse: collapse; font-size: 17px; }
    th { text-align: left; font-size: 18px; height: 25px; line-height: 22px; padding: 0 0 0 3px; border-bottom: 2px solid #333; }
    td { height: 23px; line-height: 22px; padding: 0 0 1px 3px; white-space: nowrap; }
    .generic { width: 418px; }
    .picked td { background: #001878; color: #fff; }
    .picked { outline: 2px dotted #c8c850; outline-offset: -2px; }
    .side { display: flex; flex-direction: column; width: 32px; }
    .cap { height: 25px; border-bottom: 2px solid #333; }
    scroll-bar { flex: 1; width: 32px; }
    .foot { display: flex; align-items: flex-start; gap: 12px; margin: 37px 24px 16px 21px; }
    .add { width: 220px; height: 44px; padding: 0 17px; gap: 22px; margin-right: auto; font-size: 18px; }
    .tall { flex-direction: column; height: 62px; padding: 3px 0 0; gap: 0; font-size: 18px; }
    .tall.ok { width: 93px; } .tall.cancel { width: 89px; }
    .pointer { position: absolute; left: 386px; top: 233px; }
  `];
  private drugs = [
    ["HCTZ/Triamterene", "Dyazide"], ["Triazolam", "Halcion"], ["Haloperidol", "Haldol"],
    ["Haloperidal Dec", "Haldol Dec."], ["A-Spas-S/L 0.125 mg Tablet, Subling", "Hyoscyamine Sulfate"], ["Hydroxyzine", "Vistaril"],
  ];
  render() {
    return html`<app-window heading="Medication Locator">
      <div class="modes" role="radiogroup" aria-label="Name type">${["Brand", "Generic", "Both"].map((m) => html`
        <label class=${classMap({ mode: true, first: m === "Brand", on: m === this.mode })}><input type="radio" name="mode" .checked=${m === this.mode} @change=${() => (this.mode = m)}>${m}</label>`)}</div>
      <nav class="letters" aria-label="First letter">${[..."ABCDEFGHIJKLMNOPQRSTUVWXYZ"].map((l) => html`<a href="#${l}">${l}</a>`)}</nav>
      <div class="grid">
        <div class="main"><table>
          <thead><tr><th class="generic">Generic Name</th><th>Brand Name</th></tr></thead>
          <tbody>${this.drugs.map(([g, b], i) => html`<tr class=${classMap({ picked: i === this.picked })} @click=${() => (this.picked = i)}><td>${g}</td><td>${b}</td></tr>`)}</tbody>
        </table></div>
        <div class="side"><div class="cap"></div><scroll-bar></scroll-bar></div>
      </div>
      <div class="foot">
        <button class="btn add">${addGlyph}Add New Drug</button>
        <button class="btn tall ok">${check(30, 24)}OK</button>
        <button class="btn tall cancel">${cross}Cancel</button>
      </div>
    </app-window>
    <svg class="pointer" width="20" height="32" viewBox="0 0 20 32" aria-hidden="true"><path d="M1 1V25L6 20 11 31 16 29 11 18H19Z" fill="#111" stroke="#eee" stroke-width="1"/></svg>`;
  }
}

/* ---------- desktop ---------- */

@customElement("app-root")
class AppRoot extends LitElement {
  static styles = css`
    :host { display: block; }
    .desktop { position: relative; min-height: 100vh; background: #000; overflow: hidden; }
    .record, .history, .locator { position: absolute; }
    .record { left: 2.55%; top: 32px; width: 57.8%; --title-size: 22px; --title-pad: 7px; }
    .history { left: 47.84%; top: 632px; width: 51.26%; --face: #eceeec; }
    .locator { left: 10.06%; top: 1016px; width: 30.6%; --face: #dcdedc; --title-size: 19px; }
  `;
  render() {
    return html`<main class="desktop">
      <medication-record class="record"></medication-record>
      <medication-history class="history"></medication-history>
      <medication-locator class="locator"></medication-locator>
    </main>`;
  }
}
